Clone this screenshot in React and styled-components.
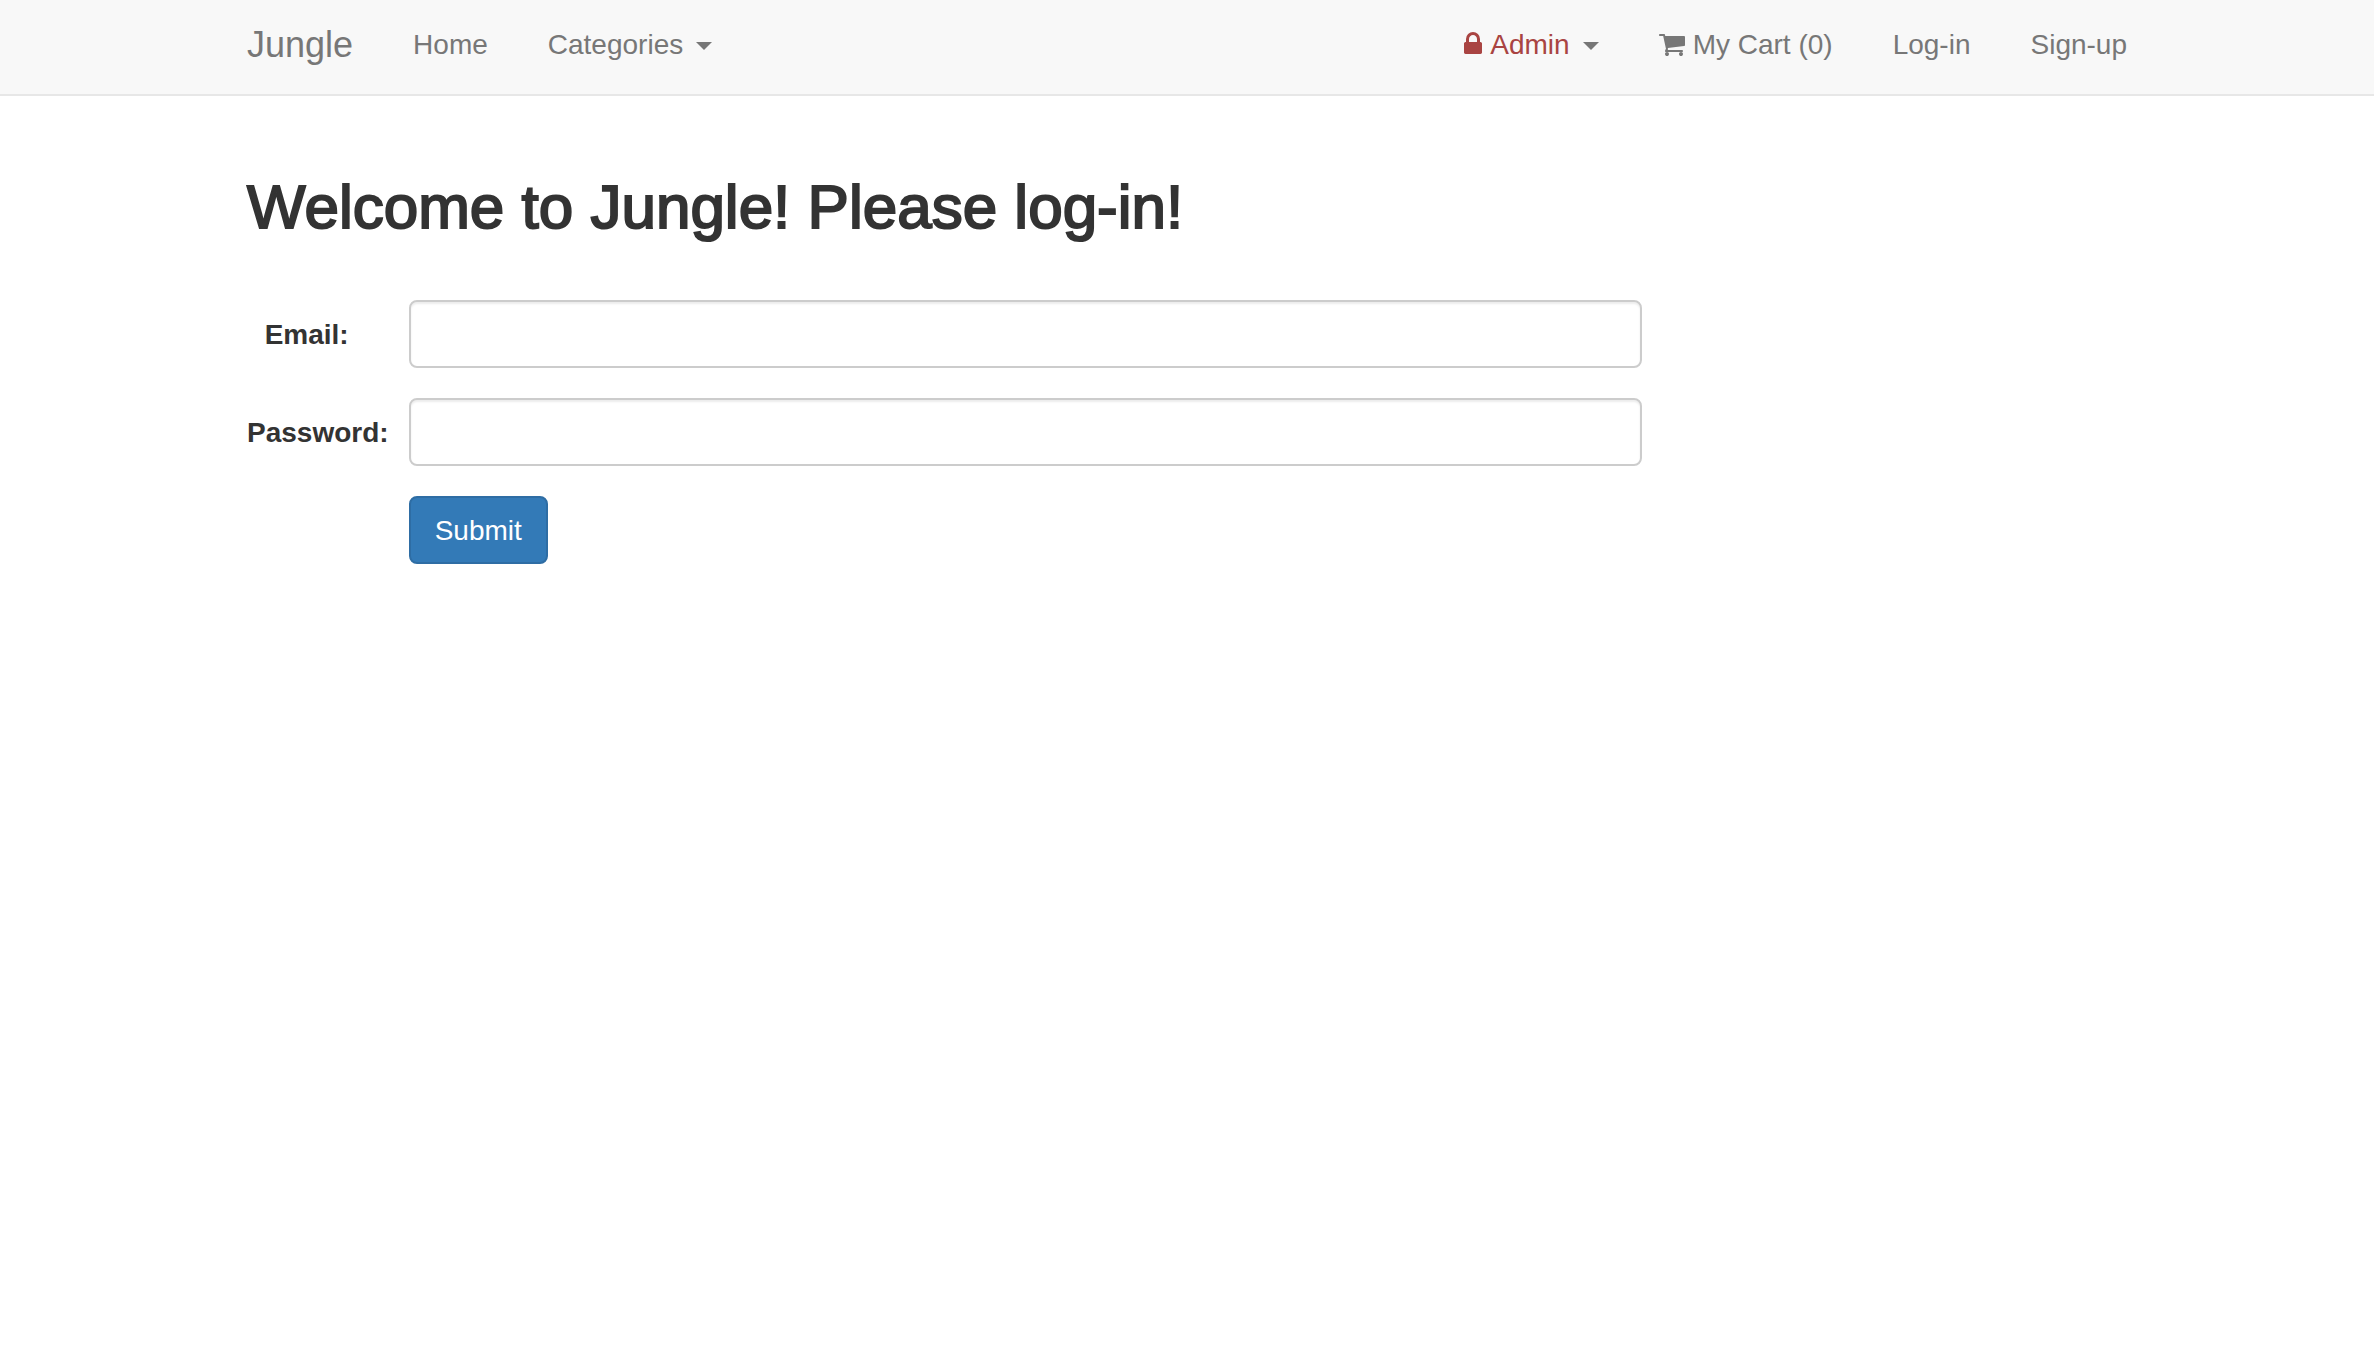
import React from "react";
import styled, { createGlobalStyle, css } from "styled-components";

const GlobalStyle = createGlobalStyle`
  *, *::before, *::after { box-sizing: border-box; }
  body {
    margin: 0;
    background: #fff;
    color: #333;
    font-family: "Helvetica Neue", "Liberation Sans", Arial, sans-serif;
    font-size: 28px;
    line-height: 40px;
  }
`;

const Container = styled.div`
  width: 100%;
  max-width: 1940px;
  margin: 0 auto;
  padding: 0 30px;
`;

const Navbar = styled.header`
  background: #f8f8f8;
  border-bottom: 2px solid #e7e7e7;
`;

const NavRow = styled.nav`
  display: flex;
  justify-content: space-between;
  margin: 0 -30px;
`;

const NavGroup = styled.div`
  display: flex;
`;

const navItem = css`
  display: flex;
  align-items: center;
  margin: 0;
  padding: 25px 30px 29px;
  border: 0;
  background: none;
  color: #777;
  font: inherit;
  line-height: 40px;
  text-decoration: none;
  white-space: nowrap;
  cursor: pointer;
`;

const Brand = styled.a`
  ${navItem}
  font-size: 36px;
`;

const NavLink = styled.a`
  ${navItem}
`;

const NavToggle = styled.button`
  ${navItem}
`;

const NavText = styled.span`
  color: ${(p) => (p.$danger ? "#a94442" : "inherit")};
`;

const Caret = styled.span`
  margin: 2px 0 0 13px;
  border-top: 8px solid currentColor;
  border-left: 8px solid transparent;
  border-right: 8px solid transparent;
`;

const Icon = styled.svg`
  height: 22px;
  margin-right: 8px;
  margin-bottom: ${(p) => (p.$danger ? "4px" : "0")};
  fill: ${(p) => (p.$danger ? "#a94442" : "currentColor")};
`;

const Title = styled.h2`
  margin: 78px 0 60px;
  font-size: 62px;
  font-weight: 500;
  line-height: 66px;
  -webkit-text-stroke: 2px #333;
`;

const Form = styled.form`
  display: grid;
  grid-template-columns: minmax(0, 1fr) minmax(0, 8fr) minmax(0, 3fr);
  row-gap: 30px;
  margin: 0 -30px;
`;

const Label = styled.label`
  grid-column: 1;
  display: flex;
  justify-content: flex-end;
  min-width: 0;
  padding: 15px 30px 0;
  font-weight: 700;
`;

const LabelText = styled.span`
  max-width: 100%;
`;

const Field = styled.div`
  grid-column: 2;
  padding: 0 30px;
`;

const Input = styled.input`
  display: block;
  width: 100%;
  height: 68px;
  padding: 12px 24px;
  border: 2px solid #ccc;
  border-radius: 8px;
  background: #fff;
  box-shadow: inset 0 2px 2px rgba(0, 0, 0, 0.075);
  color: #555;
  font: inherit;
`;

const Submit = styled.button`
  display: block;
  padding: 13px 24px 11px;
  border: 2px solid #2e6da4;
  border-radius: 8px;
  background: #337ab7;
  color: #fff;
  font: inherit;
  cursor: pointer;
`;

const LockIcon = () => (
  <Icon $danger width="18" viewBox="320 128 1152 1408" aria-hidden="true">
    <path d="M640 768h512v-192q0-106-75-181t-181-75-181 75-75 181v192zm832 96v576q0 40-28 68t-68 28h-960q-40 0-68-28t-28-68v-576q0-40 28-68t68-28h32v-192q0-184 132-316t316-132 316 132 132 316v192h32q40 0 68 28t28 68z" />
  </Icon>
);

const CartIcon = () => (
  <Icon width="26" viewBox="64 256 1664 1408" aria-hidden="true">
    <path d="M704 1536q0 52-38 90t-90 38-90-38-38-90 38-90 90-38 90 38 38 90zm896 0q0 52-38 90t-90 38-90-38-38-90 38-90 90-38 90 38 38 90zm128-1088v512q0 24-16.5 42.5t-40.5 21.5l-1044 122q13 60 13 70 0 16-24 64h920q26 0 45 19t19 45-19 45-45 19h-1024q-26 0-45-19t-19-45q0-11 8-31.5t16-36 21.5-40 15.5-29.5l-177-823h-204q-26 0-45-19t-19-45 19-45 45-19h256q16 0 28.5 6.5t19.5 15.5 13 24.5 8 26 5.5 29.5 4.5 26h1201q26 0 45 19t19 45z" />
  </Icon>
);

export default function App() {
  return (
    <>
      <GlobalStyle />
      <Navbar>
        <Container>
          <NavRow>
            <NavGroup>
              <Brand href="#">Jungle</Brand>
              <NavLink href="#">Home</NavLink>
              <NavToggle type="button">
                <NavText>Categories</NavText>
                <Caret />
              </NavToggle>
            </NavGroup>
            <NavGroup>
              <NavToggle type="button">
                <LockIcon />
                <NavText $danger>Admin</NavText>
                <Caret />
              </NavToggle>
              <NavLink href="#">
                <CartIcon />
                <NavText>My Cart (0)</NavText>
              </NavLink>
              <NavLink href="#">Log-in</NavLink>
              <NavLink href="#">Sign-up</NavLink>
            </NavGroup>
          </NavRow>
        </Container>
      </Navbar>
      <Container as="main">
        <Title>Welcome to Jungle! Please log-in!</Title>
        <Form onSubmit={(e) => e.preventDefault()}>
          <Label htmlFor="email">
            <LabelText>Email:</LabelText>
          </Label>
          <Field>
            <Input id="email" name="email" type="text" />
          </Field>
          <Label htmlFor="password">
            <LabelText>Password:</LabelText>
          </Label>
          <Field>
            <Input id="password" name="password" type="password" />
          </Field>
          <Field>
            <Submit type="submit">Submit</Submit>
          </Field>
        </Form>
      </Container>
    </>
  );
}
